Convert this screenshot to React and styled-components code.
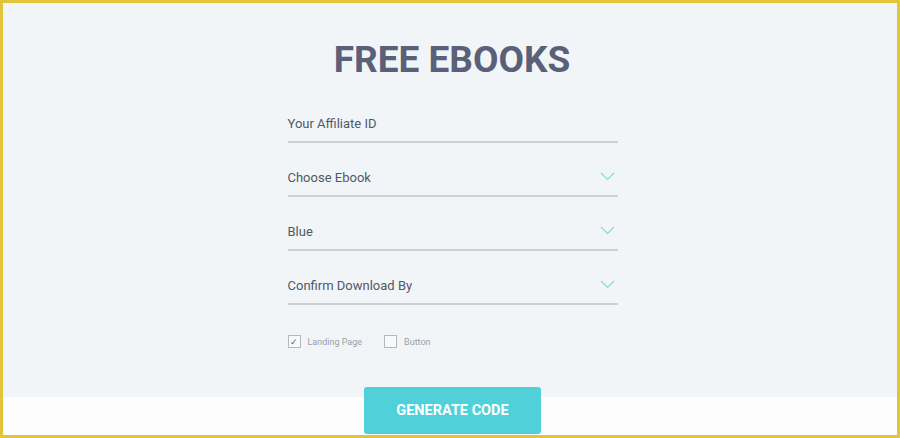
import React from 'react';
import styled, { createGlobalStyle } from 'styled-components';

const GlobalStyle = createGlobalStyle`
  html, body {
    margin: 0;
    padding: 0;
    background: #fdfdfd;
  }
  * {
    box-sizing: border-box;
  }
`;

const fields = [
  { label: 'Your Affiliate ID', select: false },
  { label: 'Choose Ebook', select: true },
  { label: 'Blue', select: true },
  { label: 'Confirm Download By', select: true },
];

const options = [
  { label: 'Landing Page', checked: true },
  { label: 'Button', checked: false },
];

function Chevron() {
  return (
    <svg width='15' height='9' viewBox='0 0 15 9' fill='none'>
      <polyline points='1,1 7.5,7.5 14,1' stroke='#86d8d8' strokeWidth='1.1' />
    </svg>
  );
}

function App() {
  return (
    <>
      <GlobalStyle />
      <Frame>
        <Title>FREE EBOOKS</Title>
        <Form>
          {fields.map((f) => (
            <Field key={f.label}>
              <Label>{f.label}</Label>
              {f.select && <Chevron />}
            </Field>
          ))}
          <Options>
            {options.map((o) => (
              <Option key={o.label}>
                <Box>{o.checked && '✓'}</Box>
                {o.label}
              </Option>
            ))}
          </Options>
        </Form>
        <Generate>GENERATE CODE</Generate>
      </Frame>
    </>
  );
}

export default App;

const Frame = styled.div`
  width: 900px;
  height: 438px;
  border: 3px solid #e2c33c;
  background: linear-gradient(
    to bottom,
    #f5f6f0 0,
    #f5f6f0 2px,
    #f1f5f8 2px,
    #f1f5f8 394px,
    #fdfdfd 394px
  );
  display: flex;
  flex-direction: column;
  align-items: center;
  padding-top: 35px;
  font-family: Roboto, 'Liberation Sans', sans-serif;
  overflow: hidden;
`;

const Title = styled.h1`
  margin: 0 0 0 4px;
  font-size: 37px;
  line-height: 43px;
  font-weight: 700;
  color: #5a6077;
`;

const Form = styled.div`
  width: 330px;
  margin-top: 8px;
  display: flex;
  flex-direction: column;
  margin-left: 5px;
`;

const Field = styled.div`
  height: 54px;
  display: flex;
  align-items: flex-end;
  justify-content: space-between;
  padding: 0 3px 9px 0;
  border-bottom: 2px solid #cdd1d6;

  svg {
    margin-bottom: 5px;
  }
`;

const Label = styled.span`
  font-size: 13px;
  line-height: 16px;
  color: #535865;
`;

const Options = styled.div`
  display: flex;
  gap: 22px;
  margin-top: 30px;
`;

const Option = styled.label`
  display: flex;
  align-items: center;
  gap: 7px;
  font-size: 9px;
  color: #9ba0a8;
`;

const Box = styled.span`
  width: 13px;
  height: 13px;
  border: 1px solid #b4b8be;
  display: flex;
  align-items: center;
  justify-content: center;
  font-size: 9px;
  color: #555a66;
  background: #f7f9fb;
`;

const Generate = styled.button`
  margin-top: 39px;
  width: 177px;
  height: 47px;
  border: none;
  border-radius: 3px;
  background: #50d1da;
  color: #fff;
  font-family: Roboto, 'Liberation Sans', sans-serif;
  font-size: 14.5px;
  font-weight: 700;
  margin-left: 5px;
`;
